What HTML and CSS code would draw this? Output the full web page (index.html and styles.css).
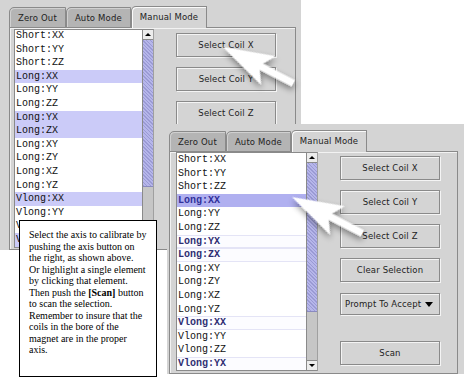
FILE: index.html
```html
<!DOCTYPE html>
<html>
<head>
<meta charset="utf-8">
<link rel="stylesheet" href="styles.css">
</head>
<body>
<div class="desk">
  <div class="win win1">
    <div class="tabs">
      <div class="tab">Zero Out</div>
      <div class="tab">Auto Mode</div>
      <div class="tab sel">Manual Mode</div>
    </div>
    <div class="content content1">
      <div class="list list1">
        <div class="rows rows1">
          <div class="row">Short:XX</div>
          <div class="row">Short:YY</div>
          <div class="row">Short:ZZ</div>
          <div class="row hl">Long:XX</div>
          <div class="row">Long:YY</div>
          <div class="row">Long:ZZ</div>
          <div class="row hl">Long:YX</div>
          <div class="row hl">Long:ZX</div>
          <div class="row">Long:XY</div>
          <div class="row">Long:ZY</div>
          <div class="row">Long:XZ</div>
          <div class="row">Long:YZ</div>
          <div class="row hl">Vlong:XX</div>
          <div class="row">Vlong:YY</div>
          <div class="row">Vlong:ZZ</div>
          <div class="row hl">Vlong:YX</div>
        </div>
        <div class="sb">
          <div class="sb-btn"><span class="tri-up"></span></div>
          <div class="thumb thumb1"></div>
        </div>
      </div>
      <div class="btns">
        <div class="btn">Select Coil X</div>
        <div class="btn">Select Coil Y</div>
        <div class="btn">Select Coil Z</div>
      </div>
    </div>
  </div>

  <div class="win win2">
    <div class="tabs">
      <div class="tab">Zero Out</div>
      <div class="tab">Auto Mode</div>
      <div class="tab sel">Manual Mode</div>
    </div>
    <div class="content content2">
      <div class="list list2">
        <div class="rows">
          <div class="row">Short:XX</div>
          <div class="row">Short:YY</div>
          <div class="row">Short:ZZ</div>
          <div class="row sel-row">Long:XX</div>
          <div class="row">Long:YY</div>
          <div class="row">Long:ZZ</div>
          <div class="row mark">Long:YX</div>
          <div class="row mark">Long:ZX</div>
          <div class="row">Long:XY</div>
          <div class="row">Long:ZY</div>
          <div class="row">Long:XZ</div>
          <div class="row">Long:YZ</div>
          <div class="row mark">Vlong:XX</div>
          <div class="row">Vlong:YY</div>
          <div class="row">Vlong:ZZ</div>
          <div class="row mark">Vlong:YX</div>
        </div>
        <div class="sb">
          <div class="sb-btn"><span class="tri-up"></span></div>
          <div class="thumb thumb2"></div>
          <div class="track"></div>
          <div class="sb-btn sb-down"><span class="tri-down"></span></div>
        </div>
      </div>
      <div class="btns">
        <div class="btn">Select Coil X</div>
        <div class="btn">Select Coil Y</div>
        <div class="btn">Select Coil Z</div>
        <div class="btn">Clear Selection</div>
        <div class="btn combo"><span>Prompt To Accept</span><span class="tri-down big"></span></div>
        <div class="btn scan">Scan</div>
      </div>
    </div>
  </div>

  <div class="tip">
    Select the axis to calibrate by<br>
    pushing the axis button on<br>
    the right, as shown above.<br>
    Or highlight a single element<br>
    by clicking that element.<br>
    Then push the <b>[Scan]</b> button<br>
    to scan the selection.<br>
    Remember to insure that the<br>
    coils in the bore of the<br>
    magnet are in the proper<br>
    axis.
  </div>

  <svg class="overlay" width="464" height="381" viewBox="0 0 464 381">
    <defs>
      <filter id="sh" x="-50%" y="-50%" width="200%" height="200%">
        <feDropShadow dx="2" dy="3" stdDeviation="3" flood-color="#000" flood-opacity="0.45"/>
      </filter>
    </defs>
    <g transform="translate(223,47) rotate(27.3)" filter="url(#sh)">
      <polygon points="0,0 51,-16 43,-3.5 79,-3.5 79,3.5 43,3.5 51,16" fill="#fff"/>
    </g>
    <g transform="translate(292,197) rotate(27.3)" filter="url(#sh)">
      <polygon points="0,0 51,-16 43,-3.5 79,-3.5 79,3.5 43,3.5 51,16" fill="#fff"/>
    </g>
  </svg>
</div>
</body>
</html>
```

FILE: styles.css
```css
body {
  margin: 0;
  background: #fff;
}

.desk {
  position: relative;
  width: 464px;
  height: 381px;
  overflow: hidden;
}

.win {
  position: absolute;
  box-sizing: border-box;
  background: #d4d4d4;
  display: flex;
  flex-direction: column;
  font-family: "DejaVu Sans", sans-serif;
}

.win1 {
  left: 0;
  top: 0;
  width: 301px;
  height: 250px;
  padding: 6px 5px 0 9px;
}

.win2 {
  left: 167px;
  top: 124px;
  width: 297px;
  height: 250px;
  padding: 6px 6px 0 2px;
}

.tabs {
  display: flex;
  align-items: flex-end;
  height: 22px;
  margin-bottom: -1px;
  position: relative;
  z-index: 1;
}

.tab {
  box-sizing: border-box;
  height: 21px;
  padding: 0 8px;
  display: flex;
  align-items: center;
  font-size: 8.5px;
  letter-spacing: 0.15px;
  color: #222;
  background: #b4b4b4;
  border: 1px solid #8a8a8a;
  border-top-left-radius: 5px;
  box-shadow: inset 1px 1px 0 #d0d0d0;
}

.tab.sel {
  height: 22px;
  background: #d4d4d4;
  border-bottom: none;
  padding-bottom: 1px;
  box-shadow: inset 1px 1px 0 #fafafa;
}

.content {
  flex: 1;
  display: flex;
  align-items: flex-start;
  border: 1px solid #8a8a8a;
  box-shadow: inset 1px 1px 0 #f2f2f2;
  min-height: 0;
}

.content1 {
  padding: 1px 0 1px 4px;
}

.content2 {
  padding: 0 0 2px 6px;
}

.list {
  box-sizing: border-box;
  display: flex;
  align-self: stretch;
  background: #fff;
  border: 1px solid #8a8a8a;
  border-right-color: #a0a0a0;
  overflow: hidden;
}

.list1 {
  width: 140px;
}

.list2 {
  width: 142px;
}

.rows {
  flex: 1;
  min-width: 0;
  overflow: hidden;
}

.rows1 {
  margin-top: -1px;
}

.row {
  height: 13.6px;
  line-height: 13.6px;
  padding-left: 1px;
  font-family: "Liberation Mono", monospace;
  font-size: 10px;
  color: #111;
  white-space: nowrap;
}

.row.hl {
  background: #cbcbf8;
}

.row.mark {
  color: #2e2e72;
  font-weight: bold;
  background: #fcfcff;
  box-shadow: inset 0 1px 0 #e4e4f6, inset 0 -1px 0 #e4e4f6;
}

.row.sel-row {
  background: #b0b0f0;
  color: #30309a;
  font-weight: bold;
}

.sb {
  width: 10px;
  flex: none;
  display: flex;
  flex-direction: column;
  background: #c6c6c6;
  border-left: 1px solid #8a8a8a;
}

.sb-btn {
  height: 10px;
  flex: none;
  box-sizing: border-box;
  background: #ececec;
  border-bottom: 1px solid #8a8a8a;
  display: flex;
  align-items: center;
  justify-content: center;
}

.sb-down {
  border-bottom: none;
  border-top: 1px solid #8a8a8a;
}

.tri-up {
  width: 0;
  height: 0;
  border-left: 3px solid transparent;
  border-right: 3px solid transparent;
  border-bottom: 3px solid #000;
}

.tri-down {
  width: 0;
  height: 0;
  border-left: 3px solid transparent;
  border-right: 3px solid transparent;
  border-top: 3px solid #000;
}

.tri-down.big {
  border-left-width: 4px;
  border-right-width: 4px;
  border-top-width: 5px;
}

.thumb {
  flex: none;
  box-sizing: border-box;
  background: repeating-linear-gradient(45deg, #9a9ad4 0 1px, #b6b6ea 1px 2.5px);
  border-bottom: 1px solid #8a8ac0;
}

.thumb1 {
  height: 147px;
}

.thumb2 {
  height: 149px;
}

.track {
  flex: 1;
}

.btns {
  display: flex;
  flex-direction: column;
  gap: 10px;
  margin-left: 22px;
  padding-top: 4px;
}

.btn {
  box-sizing: border-box;
  width: 100px;
  height: 24px;
  display: flex;
  align-items: center;
  justify-content: center;
  font-size: 8.5px;
  letter-spacing: 0.15px;
  color: #222;
  background: #d4d4d4;
  border: 1px solid #8a8a8a;
  box-shadow: inset 1px 1px 0 #f4f4f4, 1px 1px 0 #f4f4f4;
}

.btn.combo {
  height: 22px;
  justify-content: space-between;
  padding: 0 6px 0 4px;
  margin-top: 1px;
}

.btn.scan {
  margin-top: 16px;
}

.tip {
  position: absolute;
  left: 19px;
  top: 220px;
  width: 138px;
  height: 157px;
  box-sizing: border-box;
  background: #fff;
  border: 1px solid #000;
  padding: 8px 0 0 9px;
  font-family: "Liberation Serif", serif;
  font-size: 10px;
  line-height: 11.5px;
  color: #000;
  white-space: nowrap;
}

.overlay {
  position: absolute;
  left: 0;
  top: 0;
  pointer-events: none;
}
```
